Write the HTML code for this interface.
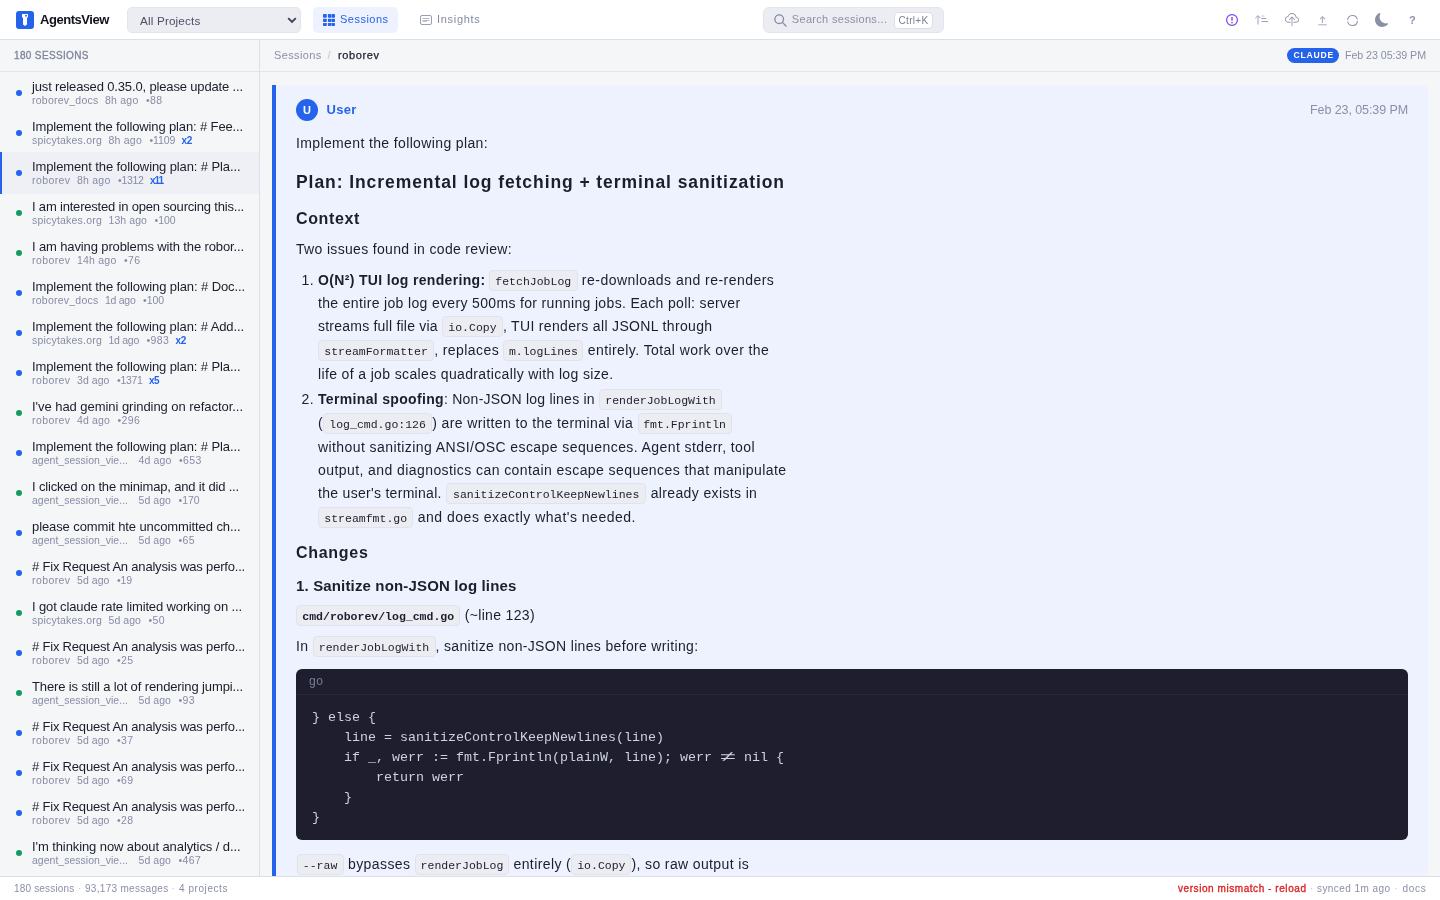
<!DOCTYPE html>
<html lang="en"><head><meta charset="utf-8"><title>AgentsView</title>
<style>
*{box-sizing:border-box;margin:0;padding:0}
html,body{width:1440px;height:900px;overflow:hidden}
body{font-family:"Liberation Sans",sans-serif;background:#f5f6f8;color:#1b1e2b;position:relative;font-size:13px;line-height:1}
.a{position:absolute;white-space:nowrap}
svg{display:block;overflow:visible}
.hdr,.side,.status,.crumb,.msg{will-change:transform}
/* header */
.hdr{position:absolute;left:0;top:0;width:1440px;height:40px;background:#fff;border-bottom:1px solid #dcdfe7}
.logo{position:absolute;left:16px;top:11px;width:18px;height:18px}
.brand{left:40px;top:10px;height:20px;line-height:20px;font-size:13px;font-weight:700;color:#11131c}
.sel{position:absolute;left:127px;top:7px;width:174px;height:26px;background:#ecedf2;border:1px solid #e3e5eb;border-radius:5px}
.sel .tx{left:12px;top:2.7px;height:20px;line-height:20px;font-size:11.7px;color:#4b5068}
.tab{position:absolute;top:7px;height:26px;border-radius:5px}
.tab .tx{top:2.350px;height:20px;line-height:20px;font-size:11px}
.tab.on{left:313px;width:85px;background:#edf2fe}
.tab.on .tx{left:27px;color:#2563eb}
.tab.off{left:410px;width:80px}
.tab.off .tx{left:27px;color:#858aa1}
.search{position:absolute;left:763px;top:7px;width:181px;height:26px;background:#ecedf3;border:1px solid #e3e5eb;border-radius:6px}
.search .tx{left:27.8px;top:1.300px;height:20px;line-height:20px;font-size:11px;color:#8a8fa6}
.kbd{position:absolute;left:129.5px;top:3.8px;width:39px;height:17px;background:#fff;border:1px solid #dcdfe8;border-radius:4px}
.kbd .tx{left:4px;top:0.5px;height:15px;line-height:15px;font-size:10px;color:#7b8198}
.ic{position:absolute}
/* sidebar */
.side{position:absolute;left:0;top:40px;width:260px;height:837px;border-right:1px solid #dcdfe7;background:#f5f6f8;overflow:hidden}
.shead{position:absolute;left:0;top:0;width:259px;height:32px;border-bottom:1px solid #e3e5eb}
.shead .tx{left:14px;top:6px;height:20px;line-height:20px;font-size:10px;color:#7f849b;-webkit-text-stroke:.3px #7f849b}
.it{position:absolute;left:0;width:259px;height:40px}
.it.on{height:42px;background:#eff0f5;border-left:2px solid #2563eb}
.dot{position:absolute;left:16px;top:18px;width:6px;height:6px;border-radius:50%}
.it.on .dot{left:14px}
.it.on .t,.it.on .m{margin-left:-2px}
.blue{background:#2563eb}.green{background:#109d65}
.t{position:absolute;left:32px;top:5px;height:20px;line-height:20px;font-size:13px;color:#1b1e2b;white-space:nowrap}
.m{position:absolute;left:32px;top:20.200px;height:16px;line-height:16px;font-size:10.500px;color:#878ca5;white-space:nowrap}
.m span{position:absolute;top:0}
.m .x{color:#2563eb;font-weight:700;font-size:10px;top:.5px}
/* status */
.status{z-index:5;position:absolute;left:0;top:876px;width:1440px;height:24px;background:#fff;border-top:1px solid #dcdfe7;font-size:10px;color:#8a8fa6}
.status .tx{top:1.1px;height:22px;line-height:22px}
.status .red{color:#dc2626;-webkit-text-stroke:.35px #dc2626}
.status .sep{color:#c3c6d3}
/* main */
.crumb{position:absolute;left:260px;top:40px;width:1180px;height:32px;border-bottom:1px solid #e3e5eb;font-size:11px}
.crumb .tx{top:5.350px;height:20px;line-height:20px}
.g{color:#8a8fa6}
.badge{position:absolute;left:1027px;top:8px;width:52px;height:15px;border-radius:8px;background:#2563eb}
.badge .tx{left:6.5px;top:0.2px;height:15px;line-height:15px;font-size:8.600px;font-weight:700;color:#fff}
.msg{position:absolute;left:272px;top:85px;width:1156px;height:800px;background:#eef2fe;border-left:4px solid #2563eb;border-radius:0 6px 6px 0}
.av{position:absolute;left:20px;top:14px;width:22px;height:22px;border-radius:50%;background:#2563eb;color:#fff;font-size:11px;font-weight:700;text-align:center;line-height:22px}
.ln{position:absolute;white-space:nowrap;height:24px;line-height:24px;font-size:14px;color:#1b1e2b}
.b{font-weight:700}
.c{display:inline-block;font-family:"Liberation Mono",monospace;font-size:11.5px;height:21px;line-height:21.3px;padding:0 5.3px;background:#ecedf3;border:1px solid #e1e3ea;border-radius:4px;vertical-align:baseline;letter-spacing:0;color:#1b1e2b}
.code{position:absolute;left:20px;top:584px;width:1112px;height:171px;background:#1e1e2e;border-radius:6px;font-family:"Liberation Mono",monospace;color:#cdd0e0}
.code .lang{left:12.75px;top:3px;height:20px;line-height:20px;font-size:12px;color:#7a7f99}
.code .hr{position:absolute;left:0;top:25px;width:100%;height:1px;background:#2a2a3c}
.code pre{position:absolute;left:16px;top:39px;font-family:"Liberation Mono",monospace;font-size:13.33px;line-height:20px;color:#cdd1e4}
.ne{display:inline-block;width:8px;margin:0 4px;text-align:center;transform:scaleX(2.1)}
</style></head>
<body>
<div class="hdr"><svg class="logo" viewBox="0 0 18 18"><rect width="18" height="18" rx="3" fill="#2563eb"/><path d="M6.6 3h4.8a.6.6 0 0 1 .6.6v2.3a.6.6 0 0 1-.6.6H11v7l-2 1.6-2-1.6v-7h-.4a.6.6 0 0 1-.6-.6V3.600a.6.6 0 0 1 .6-.6z" fill="#fff"/><circle cx="10" cy="4.8" r=".95" fill="#2563eb"/></svg><div class="a brand"><span style="letter-spacing:-0.465px">AgentsView</span></div><div class="sel"><div class="a tx"><span style="letter-spacing:0.169px">All Projects</span></div><svg class="ic" style="left:158.5px;top:8.700px" width="10" height="7" viewBox="0 0 10 7"><path d="M1.2 1.2 5 5l3.800-3.800" fill="none" stroke="#3f4459" stroke-width="1.900"/></svg></div><div class="tab on"><svg class="ic" style="left:10px;top:7px" width="12" height="12" viewBox="0 0 12 12" fill="#2563eb"><rect x="0.00" y="0.00" width="3.80" height="3.70" rx=".7"/><rect x="4.90" y="0.00" width="3.35" height="3.70" rx=".7"/><rect x="8.45" y="0.00" width="3.55" height="3.70" rx=".7"/><rect x="0.00" y="4.80" width="3.80" height="3.20" rx=".7"/><rect x="4.90" y="4.80" width="3.35" height="3.20" rx=".7"/><rect x="8.45" y="4.80" width="3.55" height="3.20" rx=".7"/><rect x="0.00" y="8.90" width="3.80" height="3.10" rx=".7"/><rect x="4.90" y="8.90" width="3.35" height="3.10" rx=".7"/><rect x="8.45" y="8.90" width="3.55" height="3.10" rx=".7"/></svg><div class="a tx"><span style="letter-spacing:0.482px">Sessions</span></div></div><div class="tab off"><svg class="ic" style="left:10px;top:8px" width="12" height="10" viewBox="0 0 12 10" fill="none" stroke="#9a9eb4"><rect x=".5" y=".5" width="11" height="9" rx="1.5"/><path d="M2.500 3.500h7M2.500 5.500h7" stroke-width="1" stroke="#b6b9c9"/><path d="M2.500 6.500h4.500" stroke-width="1" stroke="#c4c7d4"/></svg><div class="a tx"><span style="letter-spacing:0.697px">Insights</span></div></div><div class="search"><svg class="ic" style="left:9.700px;top:5.700px" width="13" height="13" viewBox="0 0 13 13" fill="none" stroke="#858aa2" stroke-width="1.300"><circle cx="5.2" cy="5.2" r="4.3"/><path d="M8.400 8.400 12 12" stroke-linecap="round"/></svg><div class="a tx"><span style="letter-spacing:0.312px">Search sessions...</span></div><div class="kbd"><div class="a tx"><span style="letter-spacing:0.323px">Ctrl+K</span></div></div></div><svg class="ic" style="left:1226px;top:14px" width="12" height="12" viewBox="0 0 12 12" fill="none" stroke="#7c3aed"><circle cx="6" cy="6" r="5.4" stroke-width="1.15"/><path d="M6 2.900v3.700" stroke-width="1.4"/><circle cx="6" cy="8.600" r=".8" fill="#7c3aed" stroke="none"/></svg><svg class="ic" style="left:1255px;top:15px" width="13" height="10" viewBox="0 0 13 10" fill="none" stroke="#9a9eb4" stroke-width="1"><path d="M3 9.500V.900M.4 3.200 3 .6l2.600 2.600"/><path d="M6.500 1h3" stroke="#c3c6d3"/><path d="M6.500 3.500h5M6.500 6.500h6.500"/></svg><svg class="ic" style="left:1285px;top:13px" width="14" height="14" viewBox="0 0 16 16" fill="#9095ac"><path fill-rule="evenodd" d="M4.406 1.342A5.530 5.530 0 0 1 8 0c2.690 0 4.923 2 5.166 4.579C14.758 4.804 16 6.137 16 7.773 16 9.569 14.502 11 12.687 11H10a.5.5 0 0 1 0-1h2.688C13.979 10 15 8.988 15 7.773c0-1.216-1.020-2.228-2.313-2.228h-.5v-.5C12.188 2.825 10.328 1 8 1a4.530 4.530 0 0 0-2.941 1.100c-.757.652-1.153 1.438-1.153 2.055v.448l-.445.049C2.064 4.805 1 5.952 1 7.318 1 8.785 2.230 10 3.781 10H6a.5.5 0 0 1 0 1H3.781C1.708 11 0 9.366 0 7.318c0-1.763 1.266-3.223 2.942-3.593.143-.863.698-1.723 1.464-2.383z"/><path fill-rule="evenodd" d="M7.646 4.146a.5.5 0 0 1 .708 0l3 3a.5.5 0 0 1-.708.708L8.500 5.707V14.500a.5.5 0 0 1-1 0V5.707L5.354 7.854a.5.5 0 1 1-.708-.708l3-3z"/></svg><svg class="ic" style="left:1318px;top:16px" width="9" height="10" viewBox="0 0 9 10" fill="none" stroke="#a9adc0" stroke-width="1.150"><path d="M4.500 6.900V.800M2 3.200 4.500.7 7 3.200"/><path d="M.2 8.800h8.600" stroke-width="1"/></svg><svg class="ic" style="left:1346.5px;top:14.500px" width="11" height="11" viewBox="0 0 11 11" fill="none" stroke="#9196ad" stroke-width="1.100"><path d="M.6 5.100A4.900 4.900 0 0 1 10.300 4.500M10.400 5.900A4.900 4.900 0 0 1 .7 6.500"/></svg><svg class="ic" style="left:1375px;top:13px" width="14" height="14" viewBox="0 0 16 16" fill="#8a8fa8"><path d="M6 .278a.768.768 0 0 1 .08.858 7.208 7.208 0 0 0-.878 3.460c0 4.021 3.278 7.277 7.318 7.277.527 0 1.040-.055 1.533-.160a.787.787 0 0 1 .81.316.733.733 0 0 1-.031.893A8.349 8.349 0 0 1 8.344 16C3.734 16 0 12.286 0 7.710 0 4.266 2.114 1.312 5.124.060A.752.752 0 0 1 6 .278z"/></svg><div class="a" style="left:1409px;top:10px;height:20px;line-height:20px;font-size:11px;font-weight:700;color:#8f94ab">?</div></div><div class="side"><div class="shead"><div class="a tx"><span style="letter-spacing:0.351px">180 SESSIONS</span></div></div><div class="it" style="top:32px"><span class="dot blue"></span><div class="t"><span style="letter-spacing:-0.149px">just released 0.35.0, please update ...</span></div><div class="m"><span style="left:0"><span style="letter-spacing:0.240px">roborev_docs</span></span><span style="left:73.0px"><span style="letter-spacing:0.229px">8h ago</span></span><span style="left:114.0px"><span style="letter-spacing:0.347px">•88</span></span></div></div><div class="it" style="top:72px"><span class="dot blue"></span><div class="t"><span style="letter-spacing:-0.133px">Implement the following plan: # Fee...</span></div><div class="m"><span style="left:0"><span style="letter-spacing:0.205px">spicytakes.org</span></span><span style="left:76.5px"><span style="letter-spacing:0.229px">8h ago</span></span><span style="left:117.5px"><span style="letter-spacing:-0.133px">•1109</span></span><span class="x" style="left:149.6px"><span style="letter-spacing:-0.412px">x2</span></span></div></div><div class="it on" style="top:112px"><span class="dot blue"></span><div class="t"><span style="letter-spacing:-0.104px">Implement the following plan: # Pla...</span></div><div class="m"><span style="left:0"><span style="letter-spacing:0.413px">roborev</span></span><span style="left:45.0px"><span style="letter-spacing:0.229px">8h ago</span></span><span style="left:86.0px"><span style="letter-spacing:-0.289px">•1312</span></span><span class="x" style="left:118.1px"><span style="letter-spacing:-1.114px">x11</span></span></div></div><div class="it" style="top:152px"><span class="dot green"></span><div class="t"><span style="letter-spacing:-0.192px">I am interested in open sourcing this...</span></div><div class="m"><span style="left:0"><span style="letter-spacing:0.205px">spicytakes.org</span></span><span style="left:76.5px"><span style="letter-spacing:0.076px">13h ago</span></span><span style="left:122.5px"><span style="letter-spacing:-0.051px">•100</span></span></div></div><div class="it" style="top:192px"><span class="dot green"></span><div class="t"><span style="letter-spacing:-0.126px">I am having problems with the robor...</span></div><div class="m"><span style="left:0"><span style="letter-spacing:0.413px">roborev</span></span><span style="left:45.0px"><span style="letter-spacing:0.219px">14h ago</span></span><span style="left:92.0px"><span style="letter-spacing:0.347px">•76</span></span></div></div><div class="it" style="top:232px"><span class="dot blue"></span><div class="t"><span style="letter-spacing:-0.100px">Implement the following plan: # Doc...</span></div><div class="m"><span style="left:0"><span style="letter-spacing:0.240px">roborev_docs</span></span><span style="left:73.0px"><span style="letter-spacing:-0.271px">1d ago</span></span><span style="left:111.0px"><span style="letter-spacing:-0.051px">•100</span></span></div></div><div class="it" style="top:272px"><span class="dot blue"></span><div class="t"><span style="letter-spacing:-0.107px">Implement the following plan: # Add...</span></div><div class="m"><span style="left:0"><span style="letter-spacing:0.205px">spicytakes.org</span></span><span style="left:76.5px"><span style="letter-spacing:-0.271px">1d ago</span></span><span style="left:114.5px"><span style="letter-spacing:0.349px">•983</span></span><span class="x" style="left:143.6px"><span style="letter-spacing:-0.412px">x2</span></span></div></div><div class="it" style="top:312px"><span class="dot blue"></span><div class="t"><span style="letter-spacing:-0.104px">Implement the following plan: # Pla...</span></div><div class="m"><span style="left:0"><span style="letter-spacing:0.413px">roborev</span></span><span style="left:45.0px"><span style="letter-spacing:0.062px">3d ago</span></span><span style="left:85.0px"><span style="letter-spacing:-0.289px">•1371</span></span><span class="x" style="left:117.1px"><span style="letter-spacing:-0.562px">x5</span></span></div></div><div class="it" style="top:352px"><span class="dot green"></span><div class="t"><span style="letter-spacing:-0.046px">I've had gemini grinding on refactor...</span></div><div class="m"><span style="left:0"><span style="letter-spacing:0.413px">roborev</span></span><span style="left:45.0px"><span style="letter-spacing:0.146px">4d ago</span></span><span style="left:85.5px"><span style="letter-spacing:0.349px">•296</span></span></div></div><div class="it" style="top:392px"><span class="dot blue"></span><div class="t"><span style="letter-spacing:-0.104px">Implement the following plan: # Pla...</span></div><div class="m"><span style="left:0"><span style="letter-spacing:0.013px">agent_session_vie...</span></span><span style="left:106.5px"><span style="letter-spacing:0.146px">4d ago</span></span><span style="left:147.0px"><span style="letter-spacing:0.349px">•653</span></span></div></div><div class="it" style="top:432px"><span class="dot green"></span><div class="t"><span style="letter-spacing:-0.172px">I clicked on the minimap, and it did ...</span></div><div class="m"><span style="left:0"><span style="letter-spacing:0.013px">agent_session_vie...</span></span><span style="left:106.5px"><span style="letter-spacing:0.062px">5d ago</span></span><span style="left:146.5px"><span style="letter-spacing:-0.051px">•170</span></span></div></div><div class="it" style="top:472px"><span class="dot blue"></span><div class="t"><span style="letter-spacing:-0.092px">please commit hte uncommitted ch...</span></div><div class="m"><span style="left:0"><span style="letter-spacing:0.013px">agent_session_vie...</span></span><span style="left:106.5px"><span style="letter-spacing:0.062px">5d ago</span></span><span style="left:146.5px"><span style="letter-spacing:0.347px">•65</span></span></div></div><div class="it" style="top:512px"><span class="dot blue"></span><div class="t"><span style="letter-spacing:-0.194px"># Fix Request An analysis was perfo...</span></div><div class="m"><span style="left:0"><span style="letter-spacing:0.413px">roborev</span></span><span style="left:45.0px"><span style="letter-spacing:0.062px">5d ago</span></span><span style="left:85.0px"><span style="letter-spacing:-0.186px">•19</span></span></div></div><div class="it" style="top:552px"><span class="dot green"></span><div class="t"><span style="letter-spacing:-0.134px">I got claude rate limited working on ...</span></div><div class="m"><span style="left:0"><span style="letter-spacing:0.205px">spicytakes.org</span></span><span style="left:76.5px"><span style="letter-spacing:0.062px">5d ago</span></span><span style="left:116.5px"><span style="letter-spacing:0.347px">•50</span></span></div></div><div class="it" style="top:592px"><span class="dot blue"></span><div class="t"><span style="letter-spacing:-0.194px"># Fix Request An analysis was perfo...</span></div><div class="m"><span style="left:0"><span style="letter-spacing:0.413px">roborev</span></span><span style="left:45.0px"><span style="letter-spacing:0.062px">5d ago</span></span><span style="left:85.0px"><span style="letter-spacing:0.347px">•25</span></span></div></div><div class="it" style="top:632px"><span class="dot green"></span><div class="t"><span style="letter-spacing:-0.120px">There is still a lot of rendering jumpi...</span></div><div class="m"><span style="left:0"><span style="letter-spacing:0.013px">agent_session_vie...</span></span><span style="left:106.5px"><span style="letter-spacing:0.062px">5d ago</span></span><span style="left:146.5px"><span style="letter-spacing:0.347px">•93</span></span></div></div><div class="it" style="top:672px"><span class="dot blue"></span><div class="t"><span style="letter-spacing:-0.194px"># Fix Request An analysis was perfo...</span></div><div class="m"><span style="left:0"><span style="letter-spacing:0.413px">roborev</span></span><span style="left:45.0px"><span style="letter-spacing:0.062px">5d ago</span></span><span style="left:85.0px"><span style="letter-spacing:0.347px">•37</span></span></div></div><div class="it" style="top:712px"><span class="dot blue"></span><div class="t"><span style="letter-spacing:-0.194px"># Fix Request An analysis was perfo...</span></div><div class="m"><span style="left:0"><span style="letter-spacing:0.413px">roborev</span></span><span style="left:45.0px"><span style="letter-spacing:0.062px">5d ago</span></span><span style="left:85.0px"><span style="letter-spacing:0.347px">•69</span></span></div></div><div class="it" style="top:752px"><span class="dot blue"></span><div class="t"><span style="letter-spacing:-0.194px"># Fix Request An analysis was perfo...</span></div><div class="m"><span style="left:0"><span style="letter-spacing:0.413px">roborev</span></span><span style="left:45.0px"><span style="letter-spacing:0.062px">5d ago</span></span><span style="left:85.0px"><span style="letter-spacing:0.347px">•28</span></span></div></div><div class="it" style="top:792px"><span class="dot green"></span><div class="t"><span style="letter-spacing:-0.091px">I'm thinking now about analytics / d...</span></div><div class="m"><span style="left:0"><span style="letter-spacing:0.013px">agent_session_vie...</span></span><span style="left:106.5px"><span style="letter-spacing:0.062px">5d ago</span></span><span style="left:146.5px"><span style="letter-spacing:0.349px">•467</span></span></div></div></div><div class="status"><div class="a tx" style="left:14px"><span style="letter-spacing:0.177px">180 sessions</span></div><div class="a tx sep" style="left:78px">·</div><div class="a tx" style="left:85px"><span style="letter-spacing:0.303px">93,173 messages</span></div><div class="a tx sep" style="left:171.5px">·</div><div class="a tx" style="left:179px"><span style="letter-spacing:0.564px">4 projects</span></div><div class="a tx red" style="left:1178px"><span style="letter-spacing:0.561px">version mismatch - reload</span></div><div class="a tx sep" style="left:1310px">·</div><div class="a tx" style="left:1317px"><span style="letter-spacing:0.436px">synced 1m ago</span></div><div class="a tx sep" style="left:1394.5px">·</div><div class="a tx" style="left:1402.5px"><span style="letter-spacing:0.719px">docs</span></div></div><div class="crumb"><div class="a tx g" style="left:14px"><span style="letter-spacing:0.357px">Sessions</span></div><div class="a tx" style="left:67.5px;color:#c3c6d3">/</div><div class="a tx" style="left:78px;color:#1b1e2b;-webkit-text-stroke:.25px #1b1e2b"><span style="letter-spacing:0.600px">roborev</span></div><div class="badge"><div class="a tx"><span style="letter-spacing:0.781px">CLAUDE</span></div></div><div class="a tx g" style="left:1085px;font-size:10.700px"><span style="letter-spacing:-0.067px">Feb 23 05:39 PM</span></div></div><div class="msg"><div class="av">U</div><div class="a" style="left:50.5px;top:14px;height:22px;line-height:22px;font-size:13px;font-weight:700;color:#2563eb"><span style="letter-spacing:0.270px">User</span></div><div class="a" style="left:1034px;top:14px;height:22px;line-height:22px;font-size:12.500px;color:#8a8fa6"><span style="letter-spacing:-0.086px">Feb 23, 05:39 PM</span></div><div class="ln" style="left:20px;top:46.15px;font-size:14px;"><span style="letter-spacing:0.368px">Implement the following plan:</span></div><div class="ln" style="left:20px;top:84.94px;font-size:17.5px;"><span class="b" style="letter-spacing:0.925px">Plan: Incremental log fetching + terminal sanitization</span></div><div class="ln" style="left:20px;top:122.26px;font-size:16px;"><span class="b" style="letter-spacing:0.634px">Context</span></div><div class="ln" style="left:20px;top:152.15px;font-size:14px;"><span style="letter-spacing:0.330px">Two issues found in code review:</span></div><div class="ln" style="left:25.5px;top:183.05px;font-size:14px;"><span style="letter-spacing:0.406px">1.</span></div><div class="ln" style="left:42px;top:183.05px;font-size:14px;"><span class="b" style="letter-spacing:0.336px">O(N²) TUI log rendering:</span><span style="letter-spacing:-0.391px"> </span><span class="c">fetchJobLog</span><span style="letter-spacing:0.469px"> re-downloads and re-renders</span></div><div class="ln" style="left:42px;top:206.15px;font-size:14px;"><span style="letter-spacing:0.341px">the entire job log every 500ms for running jobs. Each poll: server</span></div><div class="ln" style="left:42px;top:229.15px;font-size:14px;"><span style="letter-spacing:0.225px">streams full file via </span><span class="c">io.Copy</span><span style="letter-spacing:0.332px">, TUI renders all JSONL through</span></div><div class="ln" style="left:42px;top:253.15px;font-size:14px;"><span class="c">streamFormatter</span><span style="letter-spacing:0.428px">, replaces </span><span class="c" style="width:80px;padding:0;text-align:center">m.logLines</span><span style="letter-spacing:0.429px"> entirely. Total work over the</span></div><div class="ln" style="left:42px;top:277.15px;font-size:14px;"><span style="letter-spacing:0.361px">life of a job scales quadratically with log size.</span></div><div class="ln" style="left:25.5px;top:302.15px;font-size:14px;"><span style="letter-spacing:0.406px">2.</span></div><div class="ln" style="left:42px;top:302.15px;font-size:14px;"><span class="b" style="letter-spacing:0.335px">Terminal spoofing</span><span style="letter-spacing:0.233px">: Non-JSON log lines in </span><span class="c">renderJobLogWith</span></div><div class="ln" style="left:42px;top:326.15px;font-size:14px;"><span style="letter-spacing:0.328px">(</span><span class="c">log_cmd.go:126</span><span style="letter-spacing:0.386px">) are written to the terminal via </span><span class="c" style="width:94.2px;padding:0;text-align:center">fmt.Fprintln</span></div><div class="ln" style="left:42px;top:350.15px;font-size:14px;"><span style="letter-spacing:0.420px">without sanitizing ANSI/OSC escape sequences. Agent stderr, tool</span></div><div class="ln" style="left:42px;top:373.15px;font-size:14px;"><span style="letter-spacing:0.423px">output, and diagnostics can contain escape sequences that manipulate</span></div><div class="ln" style="left:42px;top:396.15px;font-size:14px;"><span style="letter-spacing:0.298px">the user's terminal. </span><span class="c" style="width:200.4px;padding:0;text-align:center">sanitizeControlKeepNewlines</span><span style="letter-spacing:0.368px"> already exists in</span></div><div class="ln" style="left:42px;top:420.15px;font-size:14px;"><span class="c">streamfmt.go</span><span style="letter-spacing:0.497px"> and does exactly what's needed.</span></div><div class="ln" style="left:20px;top:456.26px;font-size:16px;"><span class="b" style="letter-spacing:0.703px">Changes</span></div><div class="ln" style="left:20px;top:488.80px;font-size:15px;"><span class="b" style="letter-spacing:0.154px">1. Sanitize non-JSON log lines</span></div><div class="ln" style="left:20px;top:518.15px;font-size:14px;"><span class="c b">cmd/roborev/log_cmd.go</span><span style="letter-spacing:0.347px"> (~line 123)</span></div><div class="ln" style="left:20px;top:549.15px;font-size:14px;"><span style="letter-spacing:0.307px">In </span><span class="c">renderJobLogWith</span><span style="letter-spacing:0.339px">, sanitize non-JSON lines before writing:</span></div><div class="code"><div class="a lang">go</div><div class="hr"></div><pre>} else {
    line = sanitizeControlKeepNewlines(line)
    if _, werr := fmt.Fprintln(plainW, line); werr <span class="ne">≠</span> nil {
        return werr
    }
}</pre></div><div class="ln" style="left:20.5px;top:767.15px;font-size:14px;"><span class="c">--raw</span><span style="letter-spacing:0.426px"> bypasses </span><span class="c" style="width:94.4px;padding:0;text-align:center">renderJobLog</span><span style="letter-spacing:0.402px"> entirely (</span><span class="c" style="width:60.3px;padding:0;text-align:center">io.Copy</span><span style="letter-spacing:0.374px">), so raw output is</span></div></div>
</body></html>
